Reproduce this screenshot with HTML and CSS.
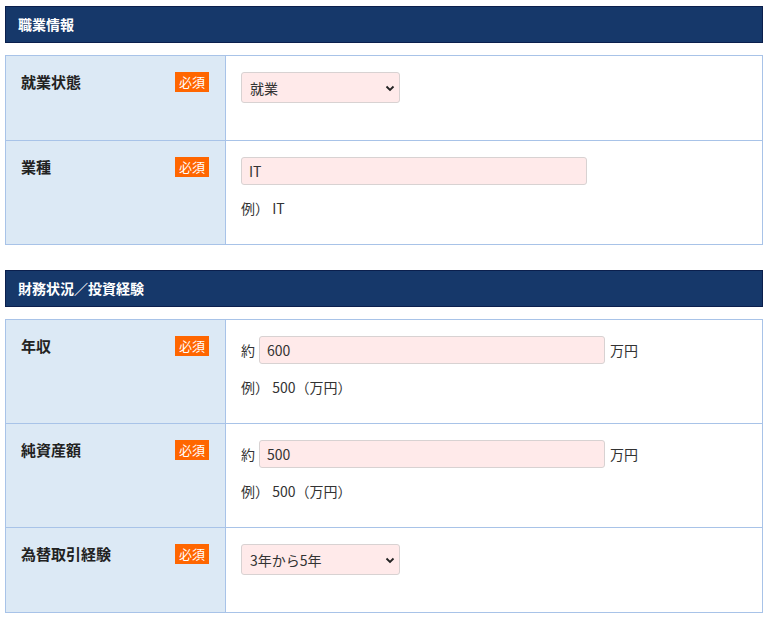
FILE: index.html
```html
<!DOCTYPE html>
<html lang="ja">
<head>
    <meta charset="UTF-8">
    <meta name="viewport" content="width=device-width, initial-scale=1.0">
    <title>職業情報</title>
    <link rel="stylesheet" href="styles.css">
</head>
<body>
    <div class="page">
        <h2 class="section-title">職業情報</h2>
        <div class="form-table">
            <div class="form-row">
                <div class="label-cell">
                    <span class="label-text">就業状態</span>
                    <span class="required">必須</span>
                </div>
                <div class="value-cell">
                    <div class="select-wrap">
                        <select class="select-box">
                            <option>就業</option>
                        </select>
                        <svg class="select-arrow" width="10" height="8" viewBox="0 0 10 8"><path d="M1.5 2.5 L5 6 L8.5 2.5" fill="none" stroke="#222" stroke-width="1.8"/></svg>
                    </div>
                </div>
            </div>
            <div class="form-row">
                <div class="label-cell">
                    <span class="label-text">業種</span>
                    <span class="required">必須</span>
                </div>
                <div class="value-cell">
                    <input type="text" class="text-input" value="IT">
                    <p class="example">例）&nbsp;IT</p>
                </div>
            </div>
        </div>

        <h2 class="section-title">財務状況／投資経験</h2>
        <div class="form-table">
            <div class="form-row">
                <div class="label-cell">
                    <span class="label-text">年収</span>
                    <span class="required">必須</span>
                </div>
                <div class="value-cell">
                    <div class="unit-row">
                        <span class="prefix">約</span>
                        <input type="text" class="text-input" value="600">
                        <span class="suffix">万円</span>
                    </div>
                    <p class="example">例）&nbsp;500（万円）</p>
                </div>
            </div>
            <div class="form-row">
                <div class="label-cell">
                    <span class="label-text">純資産額</span>
                    <span class="required">必須</span>
                </div>
                <div class="value-cell">
                    <div class="unit-row">
                        <span class="prefix">約</span>
                        <input type="text" class="text-input" value="500">
                        <span class="suffix">万円</span>
                    </div>
                    <p class="example">例）&nbsp;500（万円）</p>
                </div>
            </div>
            <div class="form-row">
                <div class="label-cell">
                    <span class="label-text">為替取引経験</span>
                    <span class="required">必須</span>
                </div>
                <div class="value-cell">
                    <div class="select-wrap">
                        <select class="select-box">
                            <option>3年から5年</option>
                        </select>
                        <svg class="select-arrow" width="10" height="8" viewBox="0 0 10 8"><path d="M1.5 2.5 L5 6 L8.5 2.5" fill="none" stroke="#222" stroke-width="1.8"/></svg>
                    </div>
                </div>
            </div>
        </div>
    </div>
</body>
</html>
```

FILE: styles.css
```css
body {
    margin: 0;
    padding: 0;
    font-family: "Noto Sans CJK JP", "Noto Sans", sans-serif;
    color: #333;
    background-color: #fff;
}

.page {
    padding: 6px 9px 0 5px;
}

.section-title {
    margin: 0 0 12px;
    height: 35px;
    padding: 0 12px;
    background-color: #16386a;
    border: 1px solid #0b1f4d;
    color: #fff;
    font-size: 14px;
    font-weight: bold;
    line-height: 35px;
}

.form-table {
    border: 1px solid #a8c3e8;
    margin-bottom: 25px;
}

.form-row {
    display: grid;
    grid-template-columns: 220px 1fr;
    min-height: 84px;
}

.form-row + .form-row {
    border-top: 1px solid #a8c3e8;
}

.label-cell {
    background-color: #dce9f5;
    border-right: 1px solid #a8c3e8;
    padding: 16px 16px 16px 15px;
    display: flex;
    justify-content: space-between;
    align-items: flex-start;
}

.label-text {
    font-size: 15px;
    font-weight: bold;
    line-height: 19px;
    color: #222;
}

.required {
    background-color: #ff6600;
    color: #fff;
    font-size: 13px;
    line-height: 20px;
    height: 20px;
    padding: 0 4px;
}

.value-cell {
    padding: 16px 15px 26px;
}

.select-wrap {
    position: relative;
    width: 159px;
}

.select-box {
    appearance: none;
    -webkit-appearance: none;
    width: 159px;
    height: 31px;
    padding: 0 24px 0 8px;
    background-color: #ffeaea;
    border: 1px solid #d8d2d2;
    border-radius: 3px;
    font-family: inherit;
    font-size: 14px;
    color: #333;
}

.select-arrow {
    position: absolute;
    right: 5px;
    top: 12px;
}

.text-input {
    box-sizing: border-box;
    width: 346px;
    height: 28px;
    padding: 0 7px;
    background-color: #ffeaea;
    border: 1px solid #d8d2d2;
    border-radius: 3px;
    font-family: inherit;
    font-size: 14px;
    color: #333;
}

.unit-row {
    display: flex;
    align-items: center;
}

.prefix {
    font-size: 14px;
    margin-right: 4px;
}

.suffix {
    font-size: 14px;
    margin-left: 5px;
}

.example {
    margin: 13px 0 0;
    font-size: 14px;
    line-height: 20px;
    color: #333;
}
```
